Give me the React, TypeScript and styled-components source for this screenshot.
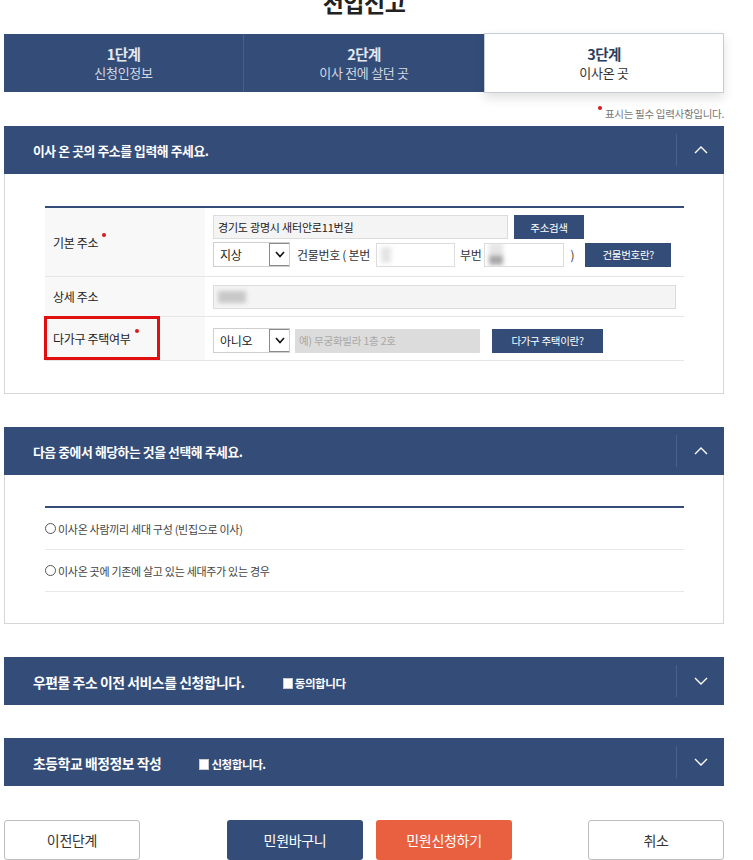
import React from "react";
import styled, { createGlobalStyle } from "styled-components";

const BLUE = "#344d78";

const GlobalStyle = createGlobalStyle`
  html, body { margin: 0; padding: 0; background: #fff; }
  body {
    font-family: "Noto Sans CJK KR", "Noto Sans", sans-serif;
    color: #333;
    overflow: hidden;
  }
  * { box-sizing: border-box; }
`;

const Page = styled.div`
  width: 720px;
  margin-left: 4px;
`;

const Title = styled.h1`
  margin: -12px 0 0;
  height: 45px;
  font-size: 23px;
  line-height: 28px;
  font-weight: 700;
  color: #222;
  text-align: center;
  letter-spacing: -0.5px;
`;

const Steps = styled.div`
  display: grid;
  grid-template-columns: repeat(3, 1fr);
  height: 58px;
  margin-top: 1px;
  background: ${BLUE};
`;

const Step = styled.div<{ $active?: boolean; $divider?: boolean }>`
  display: flex;
  flex-direction: column;
  align-items: center;
  justify-content: center;
  position: relative;
  z-index: ${(p) => (p.$active ? 1 : 0)};
  background: ${(p) => (p.$active ? "#fff" : BLUE)};
  border: ${(p) => (p.$active ? "1px solid #c6cbd4" : "none")};
  border-right: ${(p) => (p.$divider ? "1px solid #4a5f85" : undefined)};
  margin: ${(p) => (p.$active ? "-1px 0 -1px" : "0")};
  box-shadow: ${(p) => (p.$active ? "0 5px 10px rgba(0,0,0,0.12)" : "none")};
`;

const StepNum = styled.div<{ $active?: boolean }>`
  font-size: 14.5px;
  font-weight: 700;
  line-height: 19px;
  letter-spacing: -0.5px;
  color: ${(p) => (p.$active ? "#2c3e5f" : "#e4e8ef")};
`;

const StepName = styled.div<{ $active?: boolean }>`
  font-size: 13px;
  line-height: 20px;
  letter-spacing: -0.3px;
  color: ${(p) => (p.$active ? "#333" : "#d3d9e3")};
`;

const Note = styled.div`
  height: 34px;
  display: flex;
  justify-content: flex-end;
  align-items: flex-end;
  padding-bottom: 6px;
  font-size: 10.5px;
  line-height: 12px;
  color: #777;
  letter-spacing: -0.3px;
`;

const NoteDot = styled.span`
  display: inline-block;
  width: 4px;
  height: 4px;
  border-radius: 50%;
  background: #d71920;
  margin-right: 3px;
  align-self: flex-start;
  margin-top: 14px;
`;

const Section = styled.section<{ $gap?: number }>`
  margin-top: ${(p) => p.$gap ?? 0}px;
`;

const Header = styled.div`
  height: 48px;
  background: ${BLUE};
  display: flex;
  align-items: center;
`;

const HeaderTitle = styled.div<{ $size: number }>`
  flex: 1;
  display: flex;
  align-items: center;
  padding-left: 29px;
  padding-top: 1px;
  color: #fff;
  font-size: ${(p) => p.$size}px;
  font-weight: 700;
  letter-spacing: -0.4px;
`;

const Agree = styled.span<{ $ml: number }>`
  display: inline-flex;
  align-items: center;
  margin-left: ${(p) => p.$ml}px;
  font-size: 11.5px;
  font-weight: 700;
  letter-spacing: -0.4px;
  margin-top: 3px;
`;

const Check = styled.span`
  width: 10px;
  height: 11px;
  background: #fff;
  border: 1px solid #ccc;
  margin-right: 2px;
`;

const Toggle = styled.div`
  width: 48px;
  height: 32px;
  border-left: 1px solid #4b6189;
  display: flex;
  align-items: center;
  justify-content: center;
`;

const Body = styled.div<{ $pt: number; $pb: number }>`
  border: 1px solid #d6d6d6;
  border-top: none;
  padding: ${(p) => p.$pt}px 39px ${(p) => p.$pb}px 40px;
`;

const Table = styled.div`
  border-top: 2px solid ${BLUE};
`;

const Row = styled.div<{ $h: number }>`
  display: grid;
  grid-template-columns: 160px 1fr;
  min-height: ${(p) => p.$h}px;
  border-bottom: 1px solid #e6e6e6;
`;

const Label = styled.div`
  position: relative;
  background: #f8f8f8;
  display: flex;
  align-items: center;
  padding-left: 8px;
  font-size: 12px;
  color: #222;
  letter-spacing: -0.3px;
`;

const Req = styled.span`
  display: inline-block;
  width: 4px;
  height: 4px;
  border-radius: 50%;
  background: #d71920;
  margin-left: 4px;
  margin-top: -15px;
`;

const Highlight = styled.div`
  position: absolute;
  left: -1px;
  top: -1px;
  width: 116px;
  height: 44px;
  border: 3px solid #e01010;
`;

const Cell = styled.div<{ $pad: string }>`
  display: flex;
  flex-direction: column;
  justify-content: center;
  gap: 3px;
  padding: ${(p) => p.$pad};
`;

const Line = styled.div`
  display: flex;
  align-items: center;
  font-size: 12px;
  color: #333;
  letter-spacing: -0.3px;
`;

const Input = styled.div<{ $w: number; $bg?: string; $border?: boolean; $ml?: number }>`
  width: ${(p) => p.$w}px;
  height: 24px;
  margin-left: ${(p) => p.$ml ?? 0}px;
  background: ${(p) => p.$bg ?? "#fff"};
  border: ${(p) => (p.$border === false ? "none" : "1px solid #dcdcdc")};
  display: flex;
  align-items: center;
  padding-left: 4px;
  font-size: 11px;
  color: #222;
  letter-spacing: -0.2px;
  overflow: hidden;
  flex: none;
`;

const Placeholder = styled.span`
  color: #a8a8a8;
  font-size: 10.5px;
`;

const Blur = styled.span<{ $w: number; $h: number; $c: string }>`
  display: inline-block;
  width: ${(p) => p.$w}px;
  height: ${(p) => p.$h}px;
  background: ${(p) => p.$c};
  filter: blur(2px);
`;

const BlurStack = styled.span`
  display: inline-flex;
  flex-direction: column;
  width: 14px;
  height: 24px;
`;

const Btn = styled.div<{ $w: number; $ml: number }>`
  width: ${(p) => p.$w}px;
  height: 24px;
  margin-left: ${(p) => p.$ml}px;
  background: ${BLUE};
  color: #fff;
  font-size: 10.5px;
  letter-spacing: -0.3px;
  display: flex;
  align-items: center;
  justify-content: center;
  flex: none;
`;

const SelectBox = styled.div`
  width: 77px;
  height: 25px;
  border: 1px solid #cfcfcf;
  background: #fff;
  display: flex;
  align-items: center;
  flex: none;
`;

const SelectText = styled.span`
  flex: 1;
  padding-left: 6px;
  font-size: 12px;
  color: #222;
`;

const Arrow = styled.span`
  width: 20px;
  height: 23px;
  border: 1px solid #8a8a8a;
  border-right: none;
  display: flex;
  align-items: center;
  justify-content: center;
  background: #fff;
`;

const Text = styled.span<{ $ml?: number; $mr?: number }>`
  margin-left: ${(p) => p.$ml ?? 0}px;
  margin-right: ${(p) => p.$mr ?? 0}px;
  white-space: nowrap;
`;

const RadioRow = styled.div`
  height: 42px;
  border-bottom: 1px solid #e8e8e8;
  display: flex;
  align-items: center;
  font-size: 11px;
  color: #444;
  letter-spacing: -0.3px;
`;

const Radio = styled.span`
  width: 11px;
  height: 11px;
  border-radius: 50%;
  border: 1px solid #555;
  margin-right: 2px;
  background: #fff;
`;

const Footer = styled.div`
  display: flex;
  margin-top: 34px;
`;

const FootBtn = styled.div<{ $kind: "line" | "blue" | "orange"; $ml?: string }>`
  width: 136px;
  height: 40px;
  border-radius: 3px;
  margin-left: ${(p) => p.$ml ?? "0"};
  display: flex;
  align-items: center;
  justify-content: center;
  font-size: 14px;
  letter-spacing: -0.3px;
  background: ${(p) => (p.$kind === "blue" ? BLUE : p.$kind === "orange" ? "#e8603f" : "#fff")};
  color: ${(p) => (p.$kind === "line" ? "#333" : "#fff")};
  border: 1px solid ${(p) => (p.$kind === "line" ? "#bdbdbd" : "transparent")};
`;

const Chevron = ({ up }: { up: boolean }) => (
  <svg width="14" height="8" viewBox="0 0 14 8">
    <polyline
      points={up ? "1,7 7,1 13,7" : "1,1 7,7 13,1"}
      fill="none"
      stroke="#fff"
      strokeWidth="1.4"
    />
  </svg>
);

const SmallV = () => (
  <svg width="10" height="7" viewBox="0 0 10 7">
    <polyline points="1,1 5,5.5 9,1" fill="none" stroke="#111" strokeWidth="1.6" />
  </svg>
);

const Select = ({ value }: { value: string }) => (
  <SelectBox>
    <SelectText>{value}</SelectText>
    <Arrow>
      <SmallV />
    </Arrow>
  </SelectBox>
);

export default function App() {
  return (
    <>
      <GlobalStyle />
      <Page>
        <Title>전입신고</Title>
        <Steps>
          <Step $divider>
            <StepNum>1단계</StepNum>
            <StepName>신청인정보</StepName>
          </Step>
          <Step>
            <StepNum>2단계</StepNum>
            <StepName>이사 전에 살던 곳</StepName>
          </Step>
          <Step $active>
            <StepNum $active>3단계</StepNum>
            <StepName $active>이사온 곳</StepName>
          </Step>
        </Steps>
        <Note>
          <NoteDot />
          표시는 필수 입력사항입니다.
        </Note>

        <Section>
          <Header>
            <HeaderTitle $size={12.8}>이사 온 곳의 주소를 입력해 주세요.</HeaderTitle>
            <Toggle>
              <Chevron up />
            </Toggle>
          </Header>
          <Body $pt={32} $pb={32}>
            <Table>
              <Row $h={69}>
                <Label>
                  기본 주소
                  <Req />
                </Label>
                <Cell $pad="7px 8px 9px">
                  <Line>
                    <Input $w={295} $bg="#f4f4f4">
                      경기도 광명시 새터안로11번길
                    </Input>
                    <Btn $w={70} $ml={6}>
                      주소검색
                    </Btn>
                  </Line>
                  <Line>
                    <Select value="지상" />
                    <Text $ml={7} $mr={6}>
                      건물번호 ( 본번
                    </Text>
                    <Input $w={79}>
                      <Blur $w={10} $h={16} $c="#e4e4e4" />
                    </Input>
                    <Text $ml={5} $mr={3}>
                      부번
                    </Text>
                    <Input $w={80}>
                      <BlurStack>
                        <Blur $w={14} $h={12} $c="#e6e6e6" />
                        <Blur $w={14} $h={10} $c="#a8a8a8" />
                      </BlurStack>
                    </Input>
                    <Text $ml={6}>)</Text>
                    <Btn $w={86} $ml={11}>
                      건물번호란?
                    </Btn>
                  </Line>
                </Cell>
              </Row>
              <Row $h={40}>
                <Label>상세 주소</Label>
                <Cell $pad="7px 7px 7px 8px">
                  <Line>
                    <Input $w={463} $bg="#f4f4f4">
                      <Blur $w={28} $h={12} $c="#c8c8c8" />
                    </Input>
                  </Line>
                </Cell>
              </Row>
              <Row $h={44}>
                <Label>
                  다가구 주택여부
                  <Req />
                  <Highlight />
                </Label>
                <Cell $pad="11px 8px 7px">
                  <Line>
                    <Select value="아니오" />
                    <Input $w={185} $bg="#dcdcdc" $border={false} $ml={5}>
                      <Placeholder>예) 무궁화빌라 1층 2호</Placeholder>
                    </Input>
                    <Btn $w={111} $ml={12}>
                      다가구 주택이란?
                    </Btn>
                  </Line>
                </Cell>
              </Row>
            </Table>
          </Body>
        </Section>

        <Section $gap={33}>
          <Header>
            <HeaderTitle $size={12.8}>다음 중에서 해당하는 것을 선택해 주세요.</HeaderTitle>
            <Toggle>
              <Chevron up />
            </Toggle>
          </Header>
          <Body $pt={31} $pb={31}>
            <Table>
              <RadioRow>
                <Radio />
                이사온 사람끼리 세대 구성 (빈집으로 이사)
              </RadioRow>
              <RadioRow>
                <Radio />
                이사온 곳에 기존에 살고 있는 세대주가 있는 경우
              </RadioRow>
            </Table>
          </Body>
        </Section>

        <Section $gap={33}>
          <Header>
            <HeaderTitle $size={13.8}>
              우편물 주소 이전 서비스를 신청합니다.
              <Agree $ml={38}>
                <Check />
                동의합니다
              </Agree>
            </HeaderTitle>
            <Toggle>
              <Chevron up={false} />
            </Toggle>
          </Header>
        </Section>

        <Section $gap={33}>
          <Header>
            <HeaderTitle $size={13.8}>
              초등학교 배정정보 작성
              <Agree $ml={38}>
                <Check />
                신청합니다.
              </Agree>
            </HeaderTitle>
            <Toggle>
              <Chevron up={false} />
            </Toggle>
          </Header>
        </Section>

        <Footer>
          <FootBtn $kind="line">이전단계</FootBtn>
          <FootBtn $kind="blue" $ml="87px">
            민원바구니
          </FootBtn>
          <FootBtn $kind="orange" $ml="13px">
            민원신청하기
          </FootBtn>
          <FootBtn $kind="line" $ml="auto">
            취소
          </FootBtn>
        </Footer>
      </Page>
    </>
  );
}
